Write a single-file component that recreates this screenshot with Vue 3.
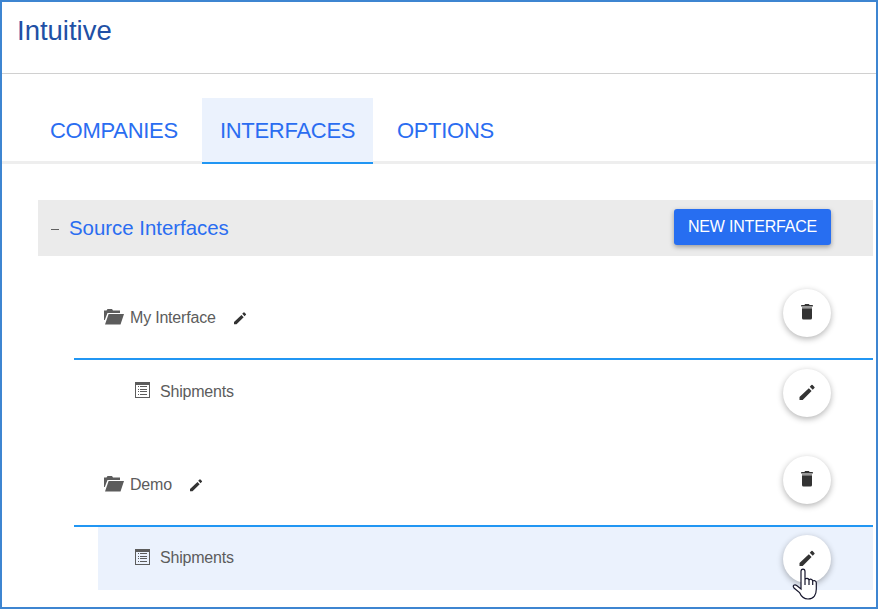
<script setup>
const tabs = [
  { label: 'COMPANIES', active: false },
  { label: 'INTERFACES', active: true },
  { label: 'OPTIONS', active: false }
]
const groups = [
  { name: 'My Interface', child: 'Shipments', hovered: false },
  { name: 'Demo', child: 'Shipments', hovered: true }
]
const pencil = 'M3 17.900V21.500h3.800L17.500 10.800l-3.300-3.300zM20.900 7.300a1 1 0 0 0 0-1.400l-2.200-2.200a1 1 0 0 0-1.400 0L15.300 5.700l3.600 3.600z'
</script>

<template>
  <div class="page">
    <header class="header"><h1>Intuitive</h1></header>
    <nav class="tabs">
      <a v-for="t in tabs" :key="t.label" class="tab" :class="{ active: t.active }">{{ t.label }}</a>
    </nav>
    <main class="content">
      <div class="bar">
        <span class="toggle"></span>
        <h2>Source Interfaces</h2>
        <button class="new">NEW INTERFACE</button>
      </div>
      <section v-for="g in groups" :key="g.name" class="group">
        <div class="row parent">
          <svg class="folder" viewBox="0 0 20 16">
            <path d="M0 11V1.500h2.500L3.500 0H8l1 1.500h7V4H3.500L.8 11z" />
            <path d="M4.600 5H20l-3.500 10.500H1z" />
          </svg>
          <span class="name">{{ g.name }}</span>
          <svg class="small-pencil" viewBox="0 0 24 24"><path :d="pencil" /></svg>
          <button class="fab">
            <svg viewBox="0 0 24 24">
              <path d="M6 7.500h12v11.800a1.800 1.800 0 0 1-1.800 1.800H7.800A1.800 1.800 0 0 1 6 19.300z" />
              <path d="M5 3.500h3.800l1-1h4.400l1 1H19v2H5z" />
              <path class="lid" d="M6 5.500h12v2H6z" />
            </svg>
          </button>
        </div>
        <div class="row child" :class="{ hovered: g.hovered }">
          <svg class="list" viewBox="0 0 15 16">
            <path d="M0 0h15v16H0zM1 3v12h13V3z" fill-rule="evenodd" />
            <path d="M3 4h1v1H3zm2 0h7v1H5zM3 7h1v1H3zm2 0h7v1H5zM3 9h1v1H3zm2 0h7v1H5zM3 12h1v1H3zm2 0h7v1H5z" />
          </svg>
          <span class="name">{{ g.child }}</span>
          <button class="fab">
            <svg viewBox="0 0 24 24"><path :d="pencil" /></svg>
            <svg v-if="g.hovered" class="cursor" viewBox="0 0 26 32">
              <path d="M9 17V3.500C9 .4 13 .4 13 3.500V12c0-2.300 4-2.300 4 .5 0-2 3.700-2 3.700 1 0-1.500 3.600-1.500 3.600 1.300V21c0 5-2 10-8.300 10-4.500 0-7-3-8.500-6.500L2 20c-2-2.500.5-4.200 3-2.300L9 21zM13 11v6M17 12v5M20.700 13v4" />
            </svg>
          </button>
        </div>
      </section>
    </main>
  </div>
</template>

<style>
body { margin: 0; background: #fff; }
</style>
<style scoped>
.page {
  box-sizing: border-box;
  width: 878px;
  height: 609px;
  border: 2px solid #3d85d1;
  overflow: hidden;
  font-family: "Liberation Sans", Arial, sans-serif;
  color: #5c5c5c;
  background: #fff;
}
h1, h2 { margin: 0; font-weight: 400; }
.header {
  box-sizing: border-box;
  height: 72px;
  padding: 12px 15px;
  border-bottom: 1px solid #d0d0d0;
}
h1 { font-size: 27.500px; line-height: 33px; color: #2150a5; }
.tabs {
  box-sizing: border-box;
  display: flex;
  gap: 6px;
  height: 90px;
  padding: 24px 30px 0;
  box-shadow: inset 0 -3px #eee;
}
.tab {
  box-sizing: border-box;
  height: 66px;
  padding: 0 18px;
  font-size: 22px;
  letter-spacing: -.28px;
  line-height: 65px;
  color: #2a6df1;
}
.active { width: 171px; background: #ebf2fd; border-bottom: 2px solid #2196f3; }
.content { padding: 36px 3px 0 36px; }
.bar {
  box-sizing: border-box;
  display: flex;
  align-items: center;
  height: 56px;
  padding: 0 42px 2px 13px;
  background: #ebebeb;
}
.toggle { width: 8px; height: 1px; margin: 5px 10px 0 0; background: #606060; }
h2 { margin-top: 2px; font-size: 20.400px; line-height: 26px; color: #2a6df1; }
.new {
  width: 157px;
  height: 36px;
  margin-left: auto;
  padding: 0 0 1px;
  border: 0;
  border-radius: 3px;
  background: #276ef1;
  box-shadow: 0 2px 5px rgba(0, 0, 0, .35);
  color: #fff;
  font: 16px/35px "Liberation Sans", Arial, sans-serif;
  letter-spacing: -.2px;
}
.group { margin-left: 36px; }
.row { box-sizing: border-box; display: flex; align-items: center; padding-right: 42px; }
.parent { height: 104px; padding-left: 30px; padding-top: 20px; border-bottom: 2px solid #2196f3; }
.child { height: 63px; margin-left: 24px; padding-left: 37px; padding-top: 2px; }
.child.hovered { padding-top: 0; background: #ebf2fd; }
.name { font-size: 16px; line-height: 20px; letter-spacing: -.2px; }
.parent .name { margin-top: 2px; }
.child .name { margin-top: -2px; }
svg { display: block; flex: none; fill: #333; }
.folder { width: 20px; height: 16px; margin-right: 6px; fill: #5c5c5c; }
.small-pencil { width: 16px; height: 16px; margin-left: 16px; margin-top: 2px; }
.list { width: 15px; height: 16px; margin-right: 10px; margin-top: -5px; fill: #5c5c5c; }
.hovered .list { margin-top: -3px; }
.fab {
  position: relative;
  display: flex;
  align-items: center;
  justify-content: center;
  width: 48px;
  height: 48px;
  margin-left: auto;
  padding: 0 0 2px;
  border: 0;
  border-radius: 50%;
  background: #fff;
  box-shadow: 0 2px 6px rgba(0, 0, 0, .3);
}
.fab svg { width: 20px; height: 20px; }
.parent .fab { margin-top: -9px; }
.lid { fill: #999; }
.fab .cursor {
  position: absolute;
  left: 9px;
  top: 33px;
  width: 26px;
  height: 32px;
  fill: #fff;
  stroke: #15152b;
  stroke-width: 1.200;
}
</style>
